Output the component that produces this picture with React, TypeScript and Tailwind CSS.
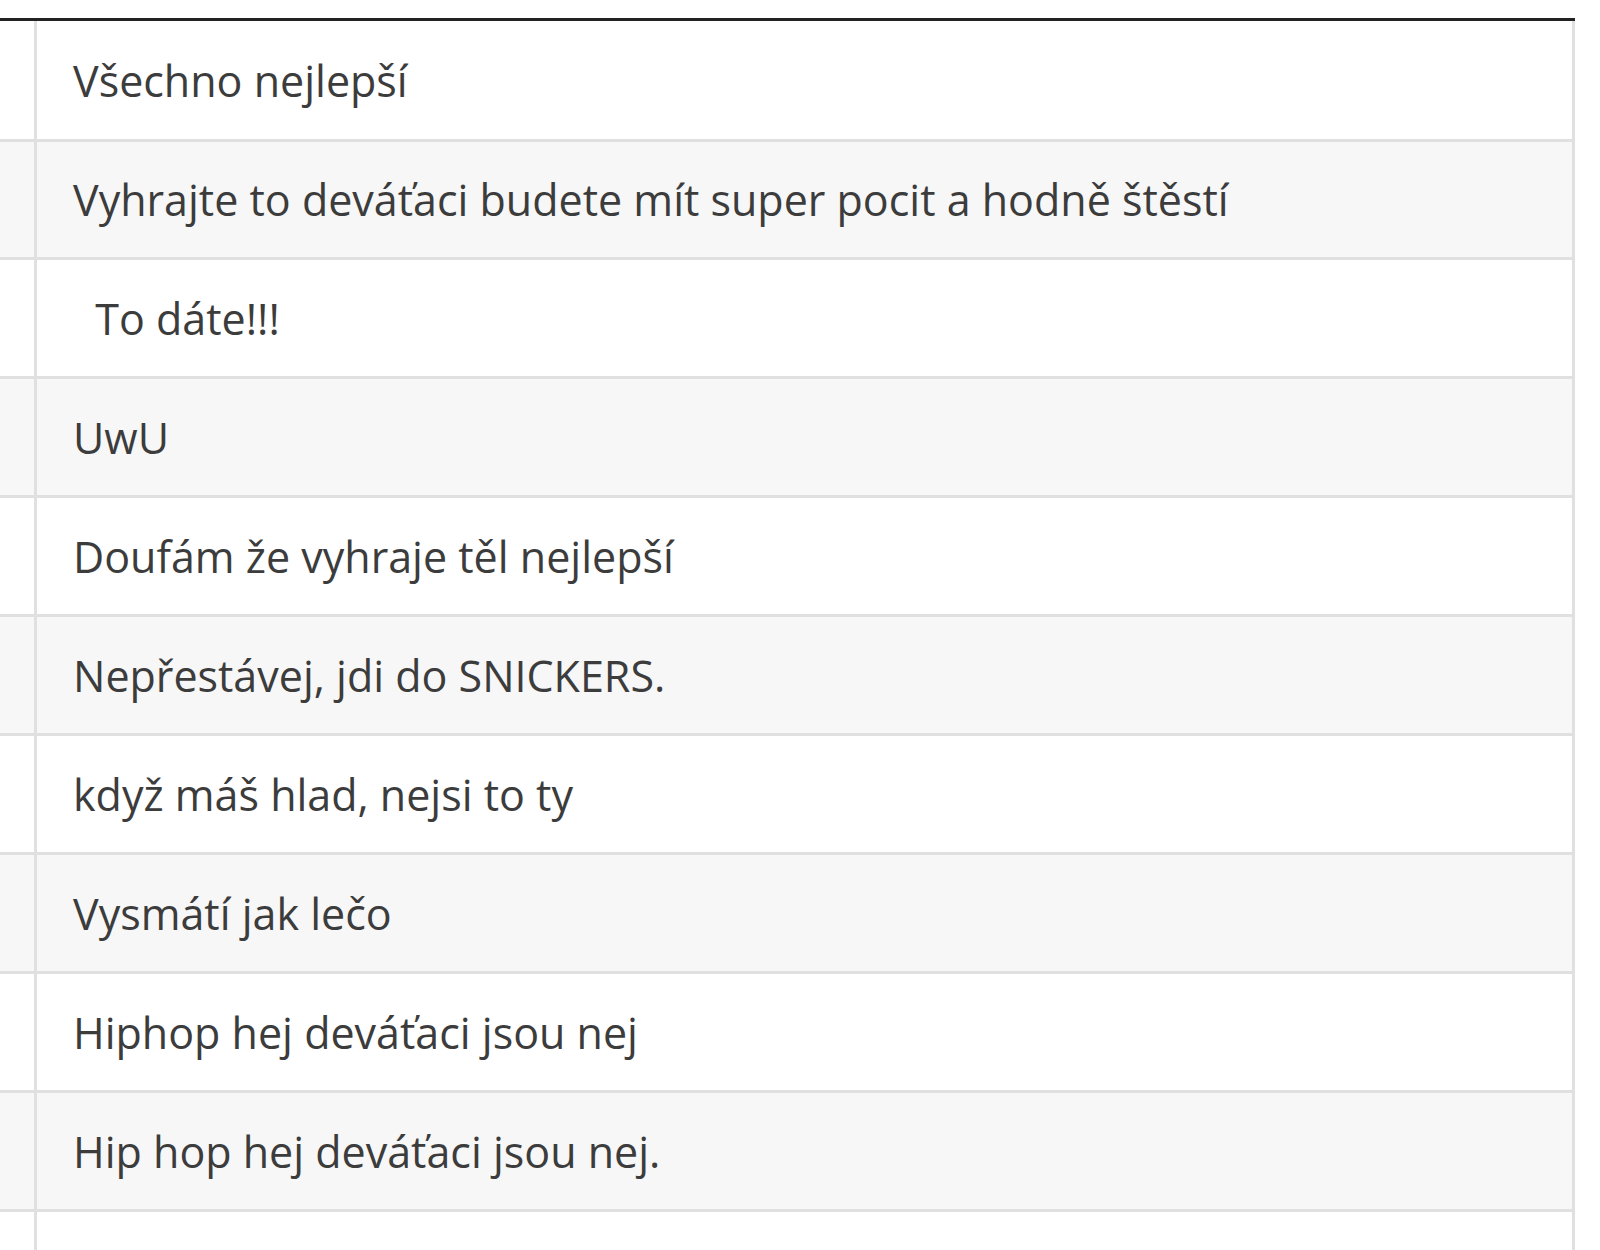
const messages = [
  'Všechno nejlepší',
  'Vyhrajte to deváťaci budete mít super pocit a hodně štěstí',
  '\u00a0\u00a0To dáte!!!',
  'UwU',
  'Doufám že vyhraje těl nejlepší',
  'Nepřestávej, jdi do SNICKERS.',
  'když máš hlad, nejsi to ty',
  'Vysmátí jak lečo',
  'Hiphop hej deváťaci jsou nej',
  'Hip hop hej deváťaci jsou nej.',
  '',
];

export default function App() {
  return (
    <div className="h-[1250px] w-[1600px] overflow-hidden bg-white pt-[18px] font-['Open_Sans',sans-serif] text-[#3c3c3c]">
      <div className="w-[1575px] border-t-[3px] border-[#222]">
        {messages.map((text, i) => (
          <div
            key={i}
            className={`flex border-b-[3px] border-[#e0e0e0] ${i === 0 ? 'h-[121px]' : i === 1 ? 'h-[118px]' : 'h-[119px]'} ${i % 2 === 1 ? 'bg-[#f7f7f7]' : 'bg-white'}`}
          >
            <div className="w-[37px] shrink-0 border-r-[3px] border-[#e0e0e0]" />
            <div className="flex flex-1 items-center border-r-[3px] border-[#e0e0e0] pl-[36px] text-[43px] leading-none whitespace-pre">
              {text}
            </div>
          </div>
        ))}
      </div>
    </div>
  );
}
